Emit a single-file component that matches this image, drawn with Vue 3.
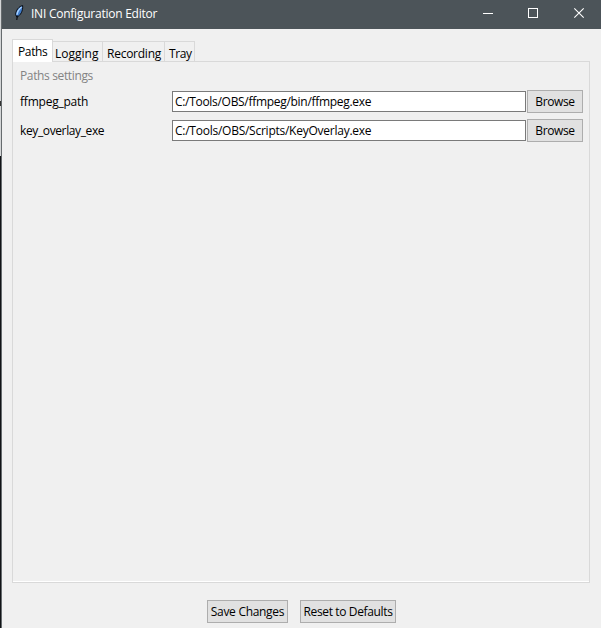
<script setup>
const tabs = [
  { name: 'Paths', cls: 'paths active' },
  { name: 'Logging', cls: 'logging' },
  { name: 'Recording', cls: 'recording' },
  { name: 'Tray', cls: 'tray' },
]
const rows = [
  { key: 'ffmpeg_path', value: 'C:/Tools/OBS/ffmpeg/bin/ffmpeg.exe', cls: 'first' },
  { key: 'key_overlay_exe', value: 'C:/Tools/OBS/Scripts/KeyOverlay.exe', cls: 'second' },
]
</script>

<template>
  <div class="desktop">
    <div class="backdrop"><i class="mark"></i></div>
    <div class="window">
      <header class="titlebar">
        <svg class="feather" width="11" height="18" viewBox="0 0 11 18">
          <path d="M8.6 1.5 C5 2.4 2 6 1.6 10.5 L2.8 13.2 C6.4 11.5 9.3 7 8.6 1.5Z" fill="#3f7dcc" stroke="#0b0d12" stroke-width="1" />
          <path d="M7.6 3 C5 5.2 3.2 8 3 10.8" fill="none" stroke="#a9d2ff" stroke-width="1.5" />
          <path d="M3.4 11.5 L2.8 16" fill="none" stroke="#0b0d12" stroke-width="1.2" />
        </svg>
        <span class="title">INI Configuration Editor</span>
        <svg class="controls" width="102" height="12" viewBox="0 0 102 12" fill="none" stroke="#fff">
          <path d="M0 6.5H10" />
          <rect x="45.5" y="1.5" width="9" height="9" />
          <path d="M91.3 1.3L100.7 10.7M100.7 1.3L91.3 10.7" stroke-width="1.1" />
        </svg>
      </header>
      <nav class="tabs">
        <div v-for="t in tabs" :key="t.name" class="tab" :class="t.cls"><span>{{ t.name }}</span></div>
      </nav>
      <main class="panel">
        <div class="heading">Paths settings</div>
        <div v-for="r in rows" :key="r.key" class="row" :class="r.cls">
          <span class="label">{{ r.key }}</span>
          <div class="field"><span>{{ r.value }}</span></div>
          <div class="button browse"><span>Browse</span></div>
        </div>
      </main>
      <footer class="actions">
        <div class="button save"><span>Save Changes</span></div>
        <div class="button reset"><span>Reset to Defaults</span></div>
      </footer>
    </div>
  </div>
</template>

<style>
body { margin: 0; overflow: hidden; }
</style>

<style scoped>
* { box-sizing: border-box; }
.desktop {
  display: flex; width: 601px; height: 628px;
  font: 12px/16px "Open Sans", "Noto Sans", sans-serif;
  letter-spacing: -0.3px; color: #000; white-space: nowrap;
}
.backdrop {
  width: 2px; flex: none; border-right: 1px solid #666b6e;
  padding-top: 101px;
  background: linear-gradient(#d4d6d7 156px, #111316 156px);
}
.mark { display: block; width: 1px; height: 5px; background: #333; }
.window { flex: 1; display: flex; flex-direction: column; background: #f0f0f0; }
.titlebar { height: 29px; flex: none; background: #4c5459; color: #fff; display: flex; align-items: center; padding-left: 12px; }
.feather { margin-top: -3px; }
.title { margin-left: 6px; margin-top: -1px; letter-spacing: -0.24px; }
.controls { margin-left: auto; margin-right: 16px; margin-top: -3px; }
.tabs { display: flex; align-items: flex-end; height: 33px; flex: none; padding-left: 10px; position: relative; z-index: 1; }
.tab { height: 21px; border: 1px solid #d9d9d9; border-left: 0; padding: 4px 0 0 2px; line-height: 16px; letter-spacing: -0.2px; }
.tab.active { height: 23px; background: #fff; border-left: 1px solid #d9d9d9; border-bottom: 0; padding: 4px 0 0 5px; letter-spacing: -0.35px; }
.paths { width: 41px; }
.logging { width: 50px; letter-spacing: 0; }
.recording { width: 62px; padding-left: 4px; letter-spacing: -0.25px; }
.tray { width: 30px; padding-left: 4px; letter-spacing: -0.4px; }
.panel {
  height: 522px; flex: none; margin: -1px 11px 0 10px; padding: 6px 6px 0 7px;
  border: 1px solid #d9d9d9; box-shadow: inset 0 -1px #fff;
}
.heading { color: #838383; height: 16px; margin-bottom: 6px; letter-spacing: -0.36px; }
.row { display: flex; align-items: center; height: 23px; margin-bottom: 6px; }
.label { width: 152px; letter-spacing: -0.22px; }
.second .label { letter-spacing: -0.38px; }
.field { width: 354px; height: 21px; background: #fff; border: 1px solid #7a7a7a; padding: 2px 0 0 2px; line-height: 16px; }
.second .field { letter-spacing: -0.25px; }
.button { height: 23px; background: #e1e1e1; border: 1px solid #adadad; display: flex; align-items: center; justify-content: center; }
.browse { width: 56px; margin-left: 1px; letter-spacing: -0.36px; }
.actions { display: flex; gap: 12px; margin: 17px 0 0 205px; }
.save { width: 81px; }
.reset { width: 96px; letter-spacing: -0.36px; }
</style>
